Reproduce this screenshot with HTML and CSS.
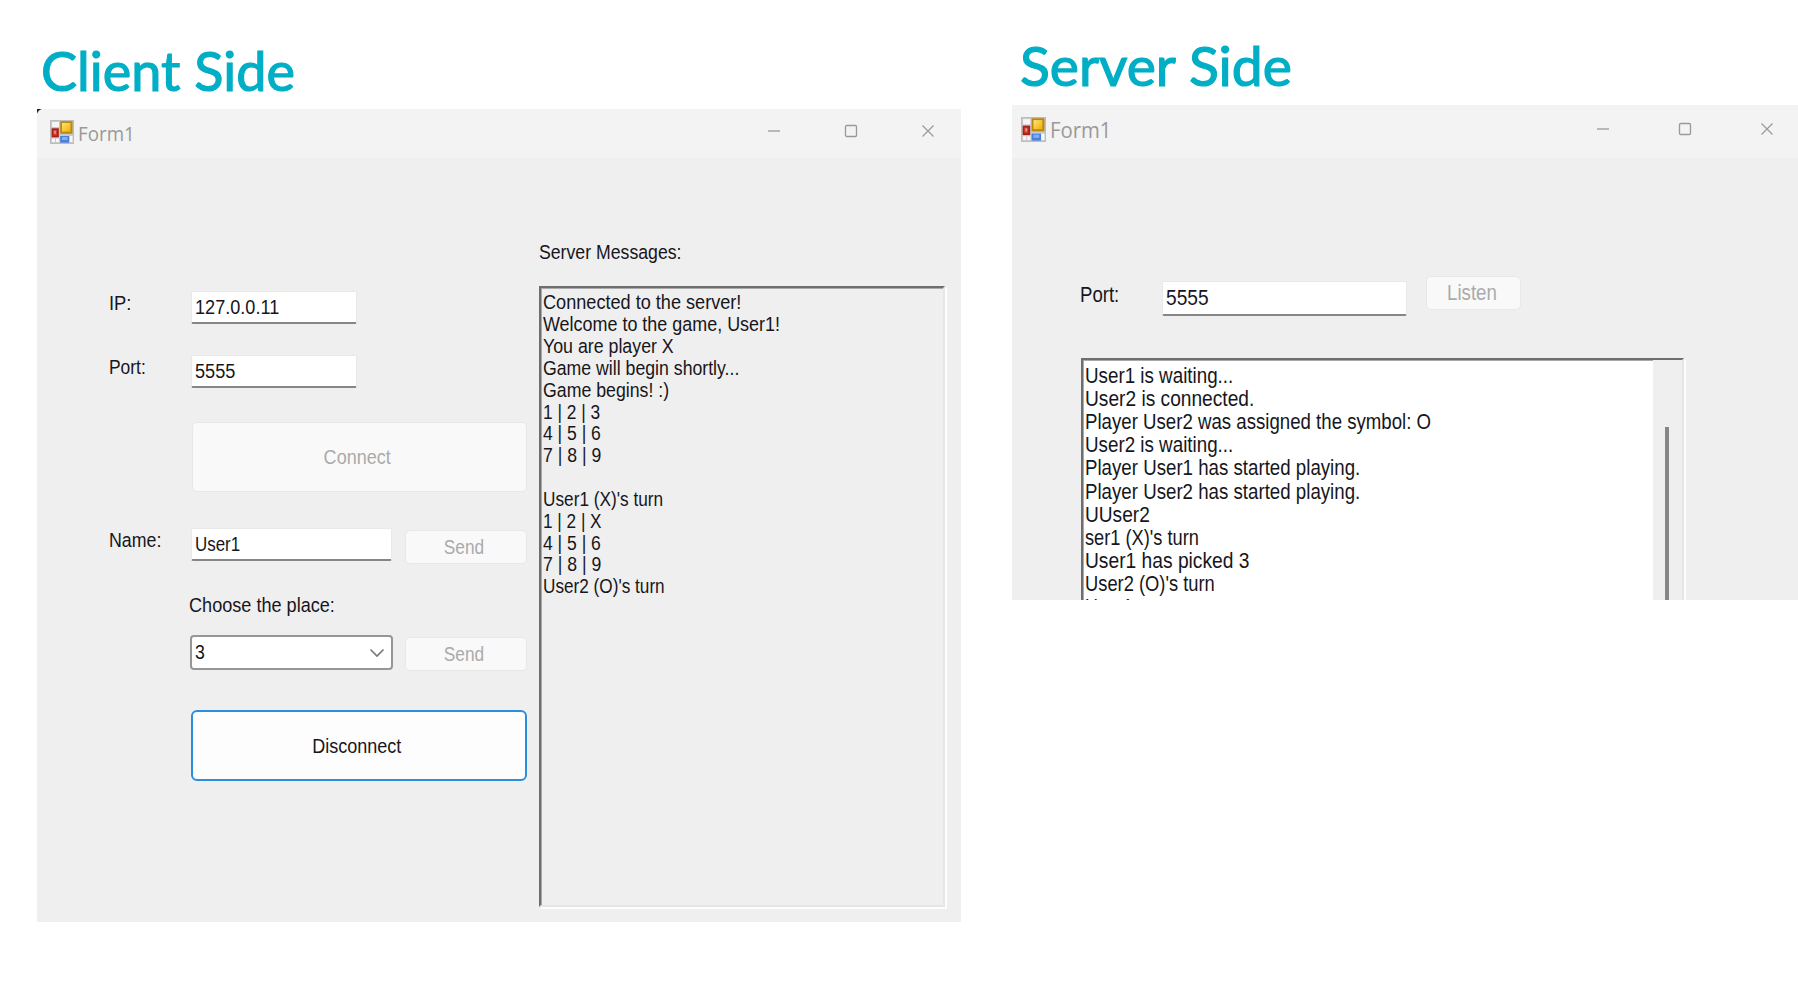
FILE: index.html
```html
<!DOCTYPE html>
<html lang="en">
<head>
<meta charset="utf-8">
<title>Client and server forms</title>
<link rel="stylesheet" href="styles.css">
</head>
<body>
<svg class="symbols" aria-hidden="true">
  <defs>
    <linearGradient id="gold" x1="0" y1="0" x2="1" y2="1"><stop offset="0" stop-color="#ffe27a"/><stop offset="1" stop-color="#eeb000"/></linearGradient>
  </defs>
  <symbol id="form-icon" viewBox="0 0 24 24">
    <rect x=".5" y=".5" width="23" height="23" fill="#c9c9c9" stroke="#bdbdbd"/>
    <rect x="2" y="2" width="7" height="5" fill="#f5f5f5"/>
    <rect x="2" y="18.500" width="3" height="3.500" fill="#f8f8f8"/>
    <rect x="6" y="18.500" width="3" height="3.500" fill="#f8f8f8"/>
    <rect x="19.500" y="16" width="3" height="6" fill="#f8f8f8"/>
    <rect x="1.600" y="8.300" width="7.200" height="9" fill="#a91f16"/>
    <rect x="3" y="10" width="4" height="5.500" fill="#cf4034"/>
    <rect x="4.300" y="10.800" width="1.500" height="3" fill="#ef9b90"/>
    <rect x="10.200" y="1.200" width="12.300" height="12.600" fill="#b88a14"/>
    <rect x="12" y="3" width="8.500" height="8.700" fill="url(#gold)"/>
    <rect x="10.200" y="16" width="9" height="6.700" fill="#4a7fdc"/>
    <rect x="12" y="17" width="5.500" height="3" fill="#82aef5"/>
  </symbol>
  <symbol id="minimise" viewBox="0 0 14 14"><path d="M1 7H13" stroke="#999" stroke-width="1.300"/></symbol>
  <symbol id="maximise" viewBox="0 0 14 14"><rect x="1.500" y="1.500" width="11" height="11" rx="1.200" fill="none" stroke="#999" stroke-width="1.300"/></symbol>
  <symbol id="close" viewBox="0 0 14 14"><path d="M1.500 1.500L12.500 12.500M12.500 1.500L1.500 12.500" stroke="#999" stroke-width="1.200"/></symbol>
</svg>

<section class="side client">
  <h1><span class="fit" data-width="250">Client Side</span></h1>
  <div class="window">
    <header class="titlebar">
      <svg class="app-icon"><use href="#form-icon"/></svg>
      <span class="title"><span class="fit" data-width="51.5">Form1</span></span>
      <svg class="control"><use href="#minimise"/></svg>
      <svg class="control"><use href="#maximise"/></svg>
      <svg class="control"><use href="#close"/></svg>
    </header>
    <div class="form">
      <div class="fields">
        <div class="row ip"><label><span class="fit" data-width="20">IP:</span></label><div class="input short"><span class="fit" data-width="83">127.0.0.11</span></div></div>
        <div class="row port"><label><span class="fit" data-width="34.5">Port:</span></label><div class="input short"><span class="fit" data-width="40">5555</span></div></div>
        <div class="button disabled connect"><span class="fit mid" data-width="66.5">Connect</span></div>
        <div class="row name"><label><span class="fit" data-width="50">Name:</span></label><div class="input"><span class="fit" data-width="44">User1</span></div><div class="button disabled send"><span class="fit mid" data-width="40">Send</span></div></div>
        <div class="caption"><span class="fit" data-width="143.5">Choose the place:</span></div>
        <div class="row choice">
          <div class="combo"><span class="fit" data-width="9.500">3</span><svg class="chevron" viewBox="0 0 16 10"><path d="M1.500 1.500L8 8L14.500 1.500" fill="none" stroke="#777" stroke-width="1.600"/></svg></div>
          <div class="button disabled send"><span class="fit mid" data-width="40">Send</span></div>
        </div>
        <div class="button focused disconnect"><span class="fit mid" data-width="88.5">Disconnect</span></div>
      </div>
      <div class="messages">
        <div class="caption"><span class="fit" data-width="141">Server Messages:</span></div>
        <div class="log">
          <p><span class="fit" data-width="196">Connected to the server!</span></p>
          <p><span class="fit" data-width="235.5">Welcome to the game, User1!</span></p>
          <p><span class="fit" data-width="131">You are player X</span></p>
          <p><span class="fit" data-width="194">Game will begin shortly...</span></p>
          <p><span class="fit" data-width="124.5">Game begins! :)</span></p>
          <p><span class="fit" data-width="56">1 | 2 | 3</span></p>
          <p><span class="fit" data-width="57.5">4 | 5 | 6</span></p>
          <p><span class="fit" data-width="57">7 | 8 | 9</span></p>
          <p></p>
          <p><span class="fit" data-width="119">User1 (X)'s turn</span></p>
          <p><span class="fit" data-width="58">1 | 2 | X</span></p>
          <p><span class="fit" data-width="57.5">4 | 5 | 6</span></p>
          <p><span class="fit" data-width="57">7 | 8 | 9</span></p>
          <p><span class="fit" data-width="120.5">User2 (O)'s turn</span></p>
        </div>
      </div>
    </div>
  </div>
</section>

<section class="side server">
  <h1><span class="fit" data-width="270">Server Side</span></h1>
  <div class="window">
    <header class="titlebar">
      <svg class="app-icon"><use href="#form-icon"/></svg>
      <span class="title"><span class="fit" data-width="55.5">Form1</span></span>
      <svg class="control"><use href="#minimise"/></svg>
      <svg class="control"><use href="#maximise"/></svg>
      <svg class="control"><use href="#close"/></svg>
    </header>
    <div class="row listen-row"><label><span class="fit" data-width="37.5">Port:</span></label><div class="input"><span class="fit" data-width="42.500">5555</span></div><div class="button disabled listen"><span class="fit mid" data-width="48">Listen</span></div></div>
    <div class="log">
      <div class="lines">
        <p><span class="fit" data-width="146.5">User1 is waiting...</span></p>
        <p><span class="fit" data-width="167.5">User2 is connected.</span></p>
        <p><span class="fit" data-width="344.5">Player User2 was assigned the symbol: O</span></p>
        <p><span class="fit" data-width="146.5">User2 is waiting...</span></p>
        <p><span class="fit" data-width="273.5">Player User1 has started playing.</span></p>
        <p><span class="fit" data-width="273.5">Player User2 has started playing.</span></p>
        <p><span class="fit" data-width="63">UUser2</span></p>
        <p><span class="fit" data-width="113">ser1 (X)'s turn</span></p>
        <p><span class="fit" data-width="163.5">User1 has picked 3</span></p>
        <p><span class="fit" data-width="128">User2 (O)'s turn</span></p>
        <p><span class="fit" data-width="46">User1</span></p>
      </div>
      <div class="scrollbar"><div class="thumb"></div></div>
    </div>
  </div>
</section>
<script src="fit.js"></script>
</body>
</html>
```
FILE: styles.css
```css
* { box-sizing: border-box; }
body {
  margin: 0;
  width: 1798px;
  height: 1000px;
  overflow: hidden;
  display: flex;
  align-items: flex-start;
  background: #fff;
  color: #16161c;
  font-family: "Liberation Sans", Arial, sans-serif;
}
p { margin: 0; }
.symbols { position: absolute; width: 0; height: 0; }
.fit { display: inline-block; white-space: pre; transform-origin: left center; }
.fit.mid { transform-origin: center; }
.side { flex: none; }
.client { width: 924px; margin-left: 37px; font-size: 20.5px; }
.server { width: 786px; margin-left: 51px; font-size: 21.7px; }

h1 {
  margin: 0;
  color: #00aec5;
  font-family: Lato, sans-serif;
  font-size: 55px;
  font-weight: 400;
  line-height: 64px;
  -webkit-text-stroke: 1.2px #00aec5;
}
.client h1 { height: 109px; padding: 38px 0 0 4px; }
.server h1 { height: 104.5px; padding: 33px 0 0 8px; }

.window { background: #efefef; overflow: hidden; }
.client .window {
  height: 813px;
  background: linear-gradient(135deg, #222 3px, #efefef 4px);
}
.server .window { height: 495.5px; }

.titlebar { display: flex; background: #f3f3f3; color: #999; }
.client .titlebar { height: 49px; padding: 0 26px 0 13px; border-top-left-radius: 6px; }
.server .titlebar { height: 53px; padding: 0 24px 0 9px; }
.app-icon { flex: none; width: 24px; height: 24px; margin-top: 11px; }
.server .app-icon { width: 25px; height: 25px; margin-top: 12px; }
.title { margin: 9.500px auto 0 3.500px; font: 20.5px/28px "Open Sans", sans-serif; }
.server .title { margin: 11.500px auto 0 3.500px; font-size: 21.5px; }
.control { flex: none; width: 14px; height: 14px; margin: 15px 0 0 63.2px; }
.server .control { margin: 17px 0 0 67.8px; }

.row { display: flex; align-items: flex-start; }
label { flex: none; line-height: 24px; }
.input {
  flex: none;
  height: 33px;
  padding-left: 3px;
  background: #fff;
  border: 1px solid #e9e9e9;
  border-bottom: 2px solid #868686;
  border-radius: 2px;
}
.button {
  display: flex;
  align-items: center;
  justify-content: center;
  flex: none;
  border: 1px solid #e8e8e8;
  border-radius: 5px;
}
.disabled { background: #f9f9f9; color: #aaa; }
.focused { background: #fdfdfd; border: 2px solid #2c8ddd; border-radius: 6px; }

.form { display: flex; }
.fields { width: 430px; margin-left: 72px; margin-right: -1px; }
.client label { width: 82px; margin-top: -.5px; }
.client .input { width: 201px; line-height: 30px; }
.client .input.short { width: 166px; }
.ip { margin-top: 133px; }
.port { margin-top: 31px; }
.connect { width: 335px; height: 70px; margin: 34px 0 0 83px; padding-right: 5px; }
.name { margin-top: 36px; height: 34px; }
.name .send { margin: 2px 0 0 13px; }
.send { width: 122px; height: 34px; padding-right: 4px; }
.fields .caption { margin: 31px 0 0 79.500px; line-height: 24px; }
.choice { margin: 18px 0 0 81px; }
.combo {
  display: flex;
  align-items: center;
  justify-content: space-between;
  width: 203px;
  height: 35px;
  padding: 0 6px 2px 3px;
  background: #fff;
  border: 2px solid #969696;
  border-radius: 4px;
}
.chevron { width: 16px; height: 10px; margin-top: 3px; }
.choice .send { margin: 2px 0 0 12px; }
.disconnect { width: 336px; height: 71px; margin: 39px 0 0 82px; padding-right: 4px; }

.log {
  border: 2px solid;
  border-color: #6e6e6e #e6e6e6 #e6e6e6 #6e6e6e;
  box-shadow: 2px 2px 0 #fdfdfd, inset 1px 1px 0 #aaa;
}
.messages { width: 406px; margin: 82px 0 0 1px; }
.messages .caption { line-height: 24px; margin-top: -.5px; }
.client .log { height: 621px; margin-top: 22px; padding: 3.800px 0 0 2px; line-height: 21.850px; }
.client .log p { height: 21.850px; }

.listen-row { margin: 118px 0 0 68px; height: 82.5px; }
.server label { width: 82px; margin-top: 7px; }
.server .input { width: 245px; height: 35.5px; margin-top: 5px; line-height: 31px; }
.listen { width: 95px; height: 34px; margin: 0 0 0 19px; padding-right: 4px; }
.server .log { display: flex; width: 603px; height: 300px; margin-left: 69px; background: #fff; line-height: 23.150px; }
.server .log p { height: 23.150px; }
.lines { flex: 1; padding: 3.900px 0 0 2.200px; }
.scrollbar { width: 29px; padding: 67px 0 0 12px; background: #efefef; }
.thumb { width: 4px; height: 230px; background: #868686; }
```
FILE: fit.js
```javascript
// Condense each label horizontally so its glyphs span data-width pixels.
const pen = document.createElement('canvas').getContext('2d');
document.querySelectorAll('.fit').forEach((label) => {
  const style = getComputedStyle(label);
  pen.font = `${style.fontWeight} ${style.fontSize} ${style.fontFamily}`;
  const box = pen.measureText(label.textContent);
  const drawn = box.actualBoundingBoxRight + box.actualBoundingBoxLeft;
  label.style.transform = `scaleX(${label.dataset.width / drawn})`;
});
```
